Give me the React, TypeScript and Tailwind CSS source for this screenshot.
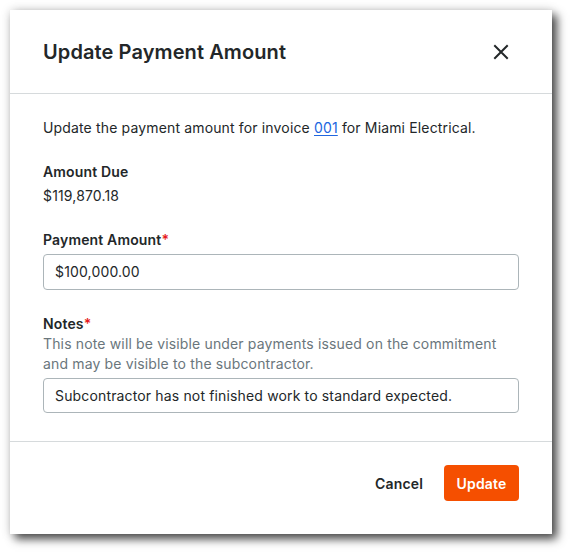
import React from "react";

export default function App() {
  return (
    <div className="w-[572px] h-[554px] bg-white relative" style={{ fontFamily: "Inter, 'Noto Sans', sans-serif" }}>
      <div className="absolute left-[10px] top-[10px] w-[542px] h-[524px] bg-white flex flex-col shadow-[5px_5px_9px_rgba(0,0,0,0.7),0_0_10px_rgba(0,0,0,0.14)] text-[#232729]">
        <div className="h-[84px] shrink-0 px-[33px] flex items-center justify-between border-b border-[#d6dadc]">
          <h1 className="text-[20px] font-semibold leading-[28px] tracking-[0.1px]">Update Payment Amount</h1>
          <button className="w-6 h-6 flex items-center justify-center mr-[6px]">
            <svg width="16" height="16" viewBox="0 0 16 16" fill="none" stroke="#232729" strokeWidth="2" strokeLinecap="square">
              <path d="M2 2L14 14M14 2L2 14" />
            </svg>
          </button>
        </div>
        <div className="px-[33px] pt-[24px] pb-[28px] text-[14px] leading-[20px] tracking-[0.15px] border-b border-[#d6dadc]">
          <p>
            Update the payment amount for invoice{" "}
            <a className="text-[#2066df] underline underline-offset-2">001</a> for Miami Electrical.
          </p>
          <div className="mt-[24px] font-semibold">Amount Due</div>
          <div className="mt-[4px]">$119,870.18</div>
          <div className="mt-[24px] font-semibold">
            Payment Amount<span className="text-[#e61920]">*</span>
          </div>
          <div className="mt-[4px] h-[36px] border border-[#acb5b9] rounded-[4px] flex items-center px-[11px]">$100,000.00</div>
          <div className="mt-[24px] font-semibold">
            Notes<span className="text-[#e61920]">*</span>
          </div>
          <p className="text-[#6a767c] pr-[10px]">
            This note will be visible under payments issued on the commitment and may be visible to the subcontractor.
          </p>
          <div className="mt-[4px] h-[35px] border border-[#acb5b9] rounded-[4px] flex items-center px-[11px]">
            Subcontractor has not finished work to standard expected.
          </div>
        </div>
        <div className="flex justify-end items-start px-[33px] pt-[23px] gap-[4px]">
          <button className="h-[36px] px-[17px] text-[14px] font-semibold tracking-[0.15px]">Cancel</button>
          <button className="h-[36px] w-[75px] rounded-[4px] bg-[#f54f00] text-white text-[14px] font-semibold tracking-[0.15px]">Update</button>
        </div>
      </div>
    </div>
  );
}
